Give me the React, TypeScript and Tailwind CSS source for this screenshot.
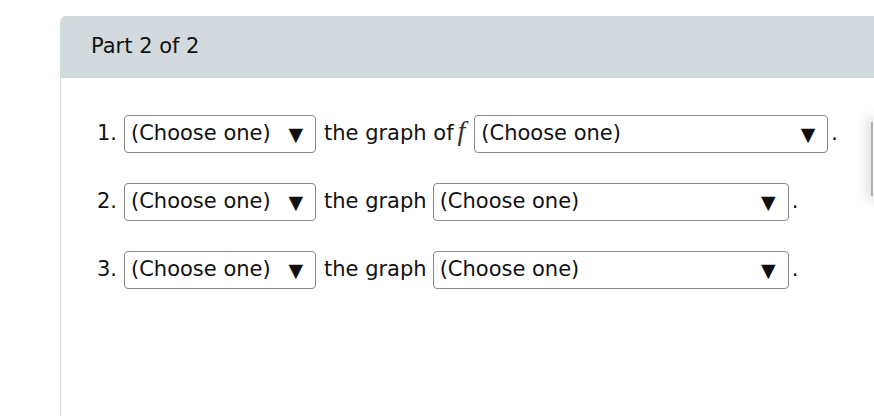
import React from 'react'

function Dropdown({ width }: { width: string }) {
  return (
    <div
      className={`${width} h-[38px] flex items-center justify-between pl-[6px] pr-[12px] border border-[#8a8a8a] rounded-[4px] bg-white`}
    >
      <span>(Choose one)</span>
      <span className="text-[19px] leading-none">▼</span>
    </div>
  )
}

const rows = [
  { n: '1.', text: 'the graph of', f: true, width: 'w-[354px]' },
  { n: '2.', text: 'the graph', f: false, width: 'w-[356px]' },
  { n: '3.', text: 'the graph', f: false, width: 'w-[356px]' },
]

export default function App() {
  return (
    <div
      className="relative w-[874px] h-[416px] overflow-hidden bg-white text-[#111]"
      style={{ fontFamily: '"DejaVu Sans", Verdana, sans-serif' }}
    >
      <div className="absolute left-[60px] top-[16px] w-[900px] h-[420px] border-l border-[#d3dbde] rounded-tl-[6px] overflow-hidden">
        <div className="h-[62px] bg-[#d2dadd] flex items-center pl-[30px] text-[21px]">
          Part 2 of 2
        </div>
        <div className="pt-[37px] pl-[36px] flex flex-col gap-[30px] text-[21px]">
          {rows.map(r => (
            <div key={r.n} className="flex items-center h-[38px]">
              <span className="w-[27px]">{r.n}</span>
              <Dropdown width="w-[192px]" />
              <span className="ml-[8px]">{r.text}</span>
              {r.f && (
                <span
                  className="ml-[4px] italic text-[28px] leading-none font-light -translate-y-[3px] text-[#333]"
                  style={{ fontFamily: '"Liberation Serif", "Times New Roman", serif' }}
                >
                  f
                </span>
              )}
              <span className={r.f ? 'ml-[9px]' : 'ml-[6px]'}>
                <Dropdown width={r.width} />
              </span>
              <span className="ml-[3px]">.</span>
            </div>
          ))}
        </div>
      </div>
      <div className="absolute left-[871px] top-[122px] w-[20px] h-[74px] bg-white border-l-2 border-[#a8b4b7] shadow-[0_0_12px_4px_rgba(0,0,0,0.12)]" />
    </div>
  )
}
